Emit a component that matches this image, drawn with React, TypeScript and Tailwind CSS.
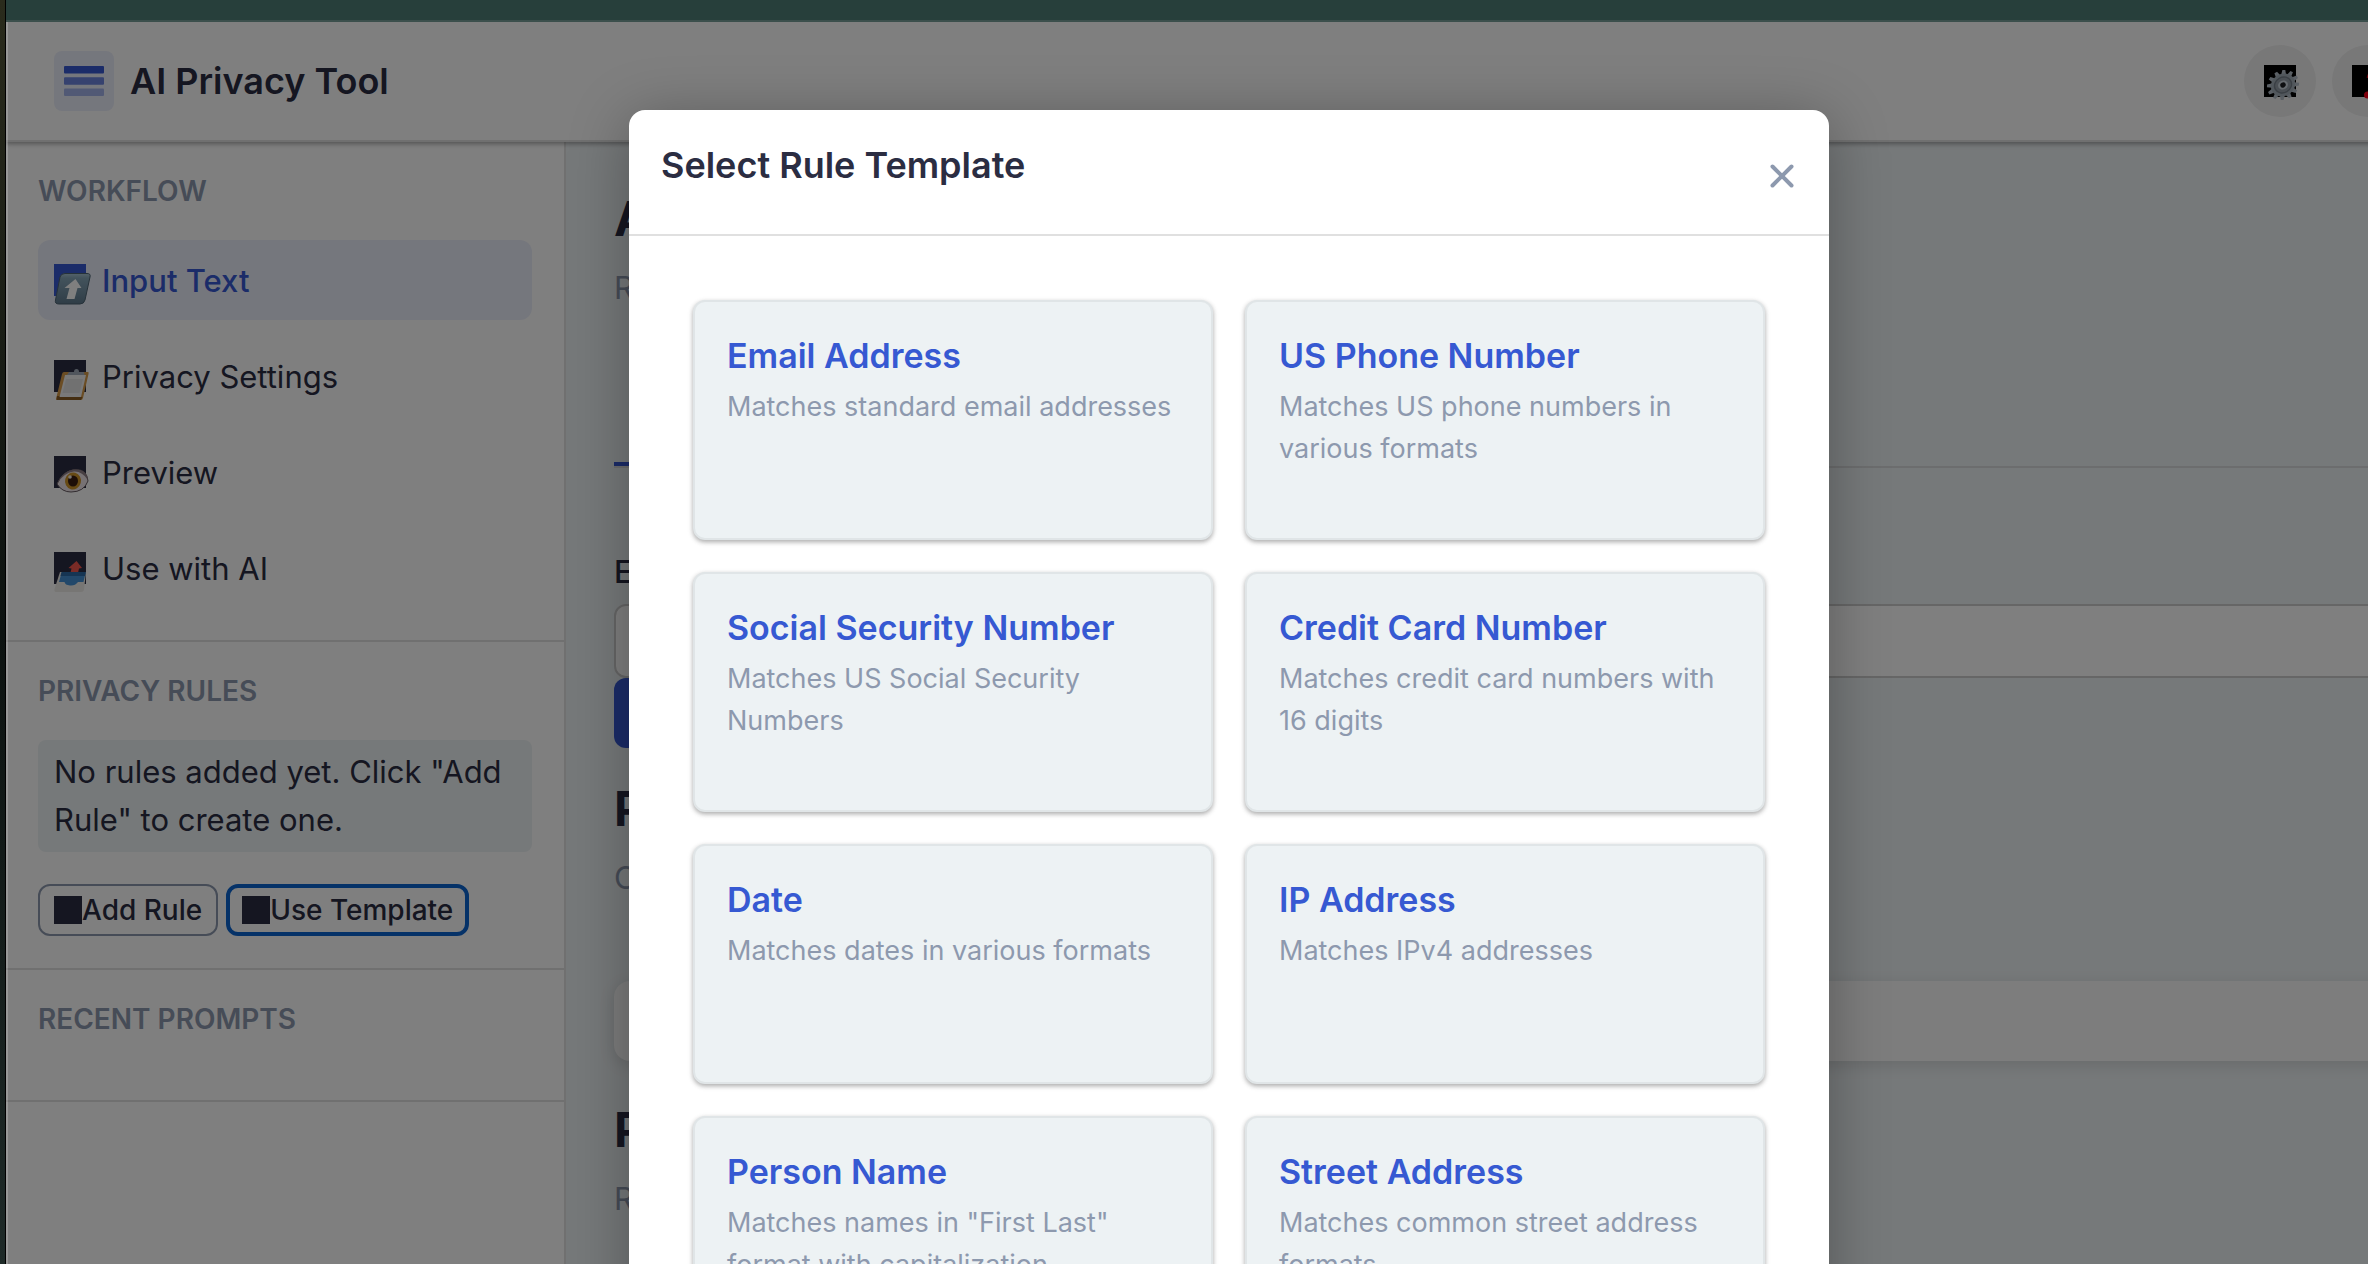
import type { ReactNode } from "react";

const templates = [
  { name: "Email Address", text: "Matches standard email addresses" },
  { name: "US Phone Number", text: "Matches US phone numbers in various formats" },
  { name: "Social Security Number", text: "Matches US Social Security Numbers" },
  { name: "Credit Card Number", text: "Matches credit card numbers with 16 digits" },
  { name: "Date", text: "Matches dates in various formats" },
  { name: "IP Address", text: "Matches IPv4 addresses" },
  { name: "Person Name", text: 'Matches names in "First Last" format with capitalization' },
  { name: "Street Address", text: "Matches common street address formats" },
];

function Emoji({ children }: { children: ReactNode }) {
  return (
    <svg viewBox="0 0 40 44" className="absolute left-0 top-0 h-11 w-10" aria-hidden="true">
      {children}
    </svg>
  );
}

function UploadEmoji() {
  return (
    <Emoji>
      <defs>
        <linearGradient id="up" x1="0" y1="0" x2="0" y2="1">
          <stop offset="0" stopColor="#a9c6d6" />
          <stop offset="0.15" stopColor="#86a6b9" />
          <stop offset="1" stopColor="#5f7a8e" />
        </linearGradient>
      </defs>
      <path d="M11 9.5H33Q37 9.500 36 13L31 36Q30 40 26 40H5Q0.500 40 1.500 36L6 13Q7 9.500 11 9.500Z" fill="url(#up)" stroke="#4d6473" strokeWidth="1" />
      <path d="M21.500 15L27.500 24H23.500L20.500 35H12.500L15.500 24H10.500Z" fill="#ffffff" />
    </Emoji>
  );
}

function ClipboardEmoji() {
  return (
    <Emoji>
      <path d="M10 12H34Q35 12 34.500 14L29 38Q28.500 40 27 40H3Q1.500 40 2.500 37L8 14Q8.500 12 10 12Z" fill="#d69a48" />
      <path d="M3 36L2.500 40H27L28.500 37Z" fill="#8a5c22" />
      <path d="M11 15H32L27 37H5.500Z" fill="#f2f2f2" />
      <path d="M12 19H29L25.500 33H8.500Z" fill="#e2e2e2" />
      <path d="M13 15L15 12H20Q20 9 22.500 9Q25 9 25 12H30L30.500 15Z" fill="#a3adbb" />
    </Emoji>
  );
}

function EyeEmoji() {
  return (
    <Emoji>
      <path d="M3 28Q9 14 22 13.500Q33 13.500 34 25Q30 36 17 36Q8 36 3 28Z" fill="#efe4e8" stroke="#665a61" strokeWidth="1" />
      <path d="M3 28Q9 14 22 13.500Q33 13.500 34 24Q28 15 20 15.500Q9 17 3 28Z" fill="#8f7f86" />
      <ellipse cx="19" cy="25" rx="8" ry="8.500" fill="#cf9428" transform="rotate(15 19 25)" />
      <ellipse cx="19" cy="25" rx="5" ry="5.500" fill="#3a1c0e" />
      <circle cx="16" cy="21" r="1.800" fill="#f5eee8" />
    </Emoji>
  );
}

function OutboxEmoji() {
  return (
    <Emoji>
      <path d="M22.500 9L28 16L25 16.500L23.500 23H16L17.500 16.500L14.500 16Z" fill="#f5564c" />
      <path d="M6 20H32L30 38Q29.500 40 27 40H2Q0 40 0.500 37Z" fill="#eeece8" />
      <path d="M7.500 21H31.500L29.500 30H24Q21 34 16 33.500Q11 33 10.500 30H5Z" fill="#4490d4" />
      <path d="M7.500 20H32L31 24H6.500Z" fill="#2c6aa6" />
    </Emoji>
  );
}

function GearEmoji() {
  const teeth = Array.from({ length: 12 }, (_, i) => i * 30);
  return (
    <Emoji>
      <g transform="translate(19 20) rotate(-30) scale(1 0.880)">
        {teeth.map((a) => (
          <path key={a} d="M-2.500 -11L-1.500 -16.500H1.500L2.500 -11Z" fill="#b4bec9" transform={`rotate(${a})`} />
        ))}
        <circle r="12.500" fill="#a3aeb9" />
        <circle r="9.500" fill="#747e88" />
        <circle r="8" fill="#959fa9" />
        <circle r="5" fill="#cdd6df" />
        <circle r="2.800" fill="#1c1f23" />
      </g>
    </Emoji>
  );
}

function QuestionEmoji() {
  return (
    <Emoji>
      <path d="M16 13Q18 5 25 6Q32 8 29 15L19 23" fill="none" stroke="#d2000f" strokeWidth="3" />
      <circle cx="15.500" cy="30" r="3.500" fill="#ff0018" />
    </Emoji>
  );
}

const nav = [
  { label: "Input Text", icon: <UploadEmoji />, active: true },
  { label: "Privacy Settings", icon: <ClipboardEmoji />, active: false },
  { label: "Preview", icon: <EyeEmoji />, active: false },
  { label: "Use with AI", icon: <OutboxEmoji />, active: false },
];

function RoundButton({ label, children }: { label: string; children: ReactNode }) {
  return (
    <button aria-label={label} className="flex size-18 shrink-0 items-center justify-center rounded-full bg-[#f0f0f0]">
      <span className="relative size-8 bg-black">{children}</span>
    </button>
  );
}

function SideHeading({ children }: { children: ReactNode }) {
  return <h2 className="mb-8 text-[28px] leading-[34px] font-semibold text-[#8d99ae]">{children}</h2>;
}

function Sidebar() {
  return (
    <aside className="w-[560px] shrink-0 border-r-2 border-[#e0e0e0] bg-white">
      <section className="border-b-2 border-[#e0e0e0] p-8">
        <SideHeading>WORKFLOW</SideHeading>
        <nav className="flex flex-col gap-4">
          {nav.map((item) => (
            <a
              key={item.label}
              href="#"
              className={
                item.active
                  ? "flex h-20 items-center gap-4 rounded-xl bg-[#3659d2]/10 px-4 font-medium text-[#3659d2]"
                  : "flex h-20 items-center gap-4 rounded-xl px-4 text-[#2b2d42]"
              }
            >
              <span className="relative size-8 bg-current">{item.icon}</span>
              <span className="pt-0.5">{item.label}</span>
            </a>
          ))}
        </nav>
      </section>
      <section className="border-b-2 border-[#e0e0e0] p-8">
        <SideHeading>PRIVACY RULES</SideHeading>
        <p className="mb-8 rounded-lg bg-[#edf2f4] px-4 py-2">No rules added yet. Click "Add Rule" to create one.</p>
        <div className="flex gap-2 text-[28px] leading-8 font-medium">
          <button className="flex h-13 items-center rounded-xl border-2 border-[#8d99ae] px-3.5">
            <span className="size-7 bg-[#2b2d42]" />
            Add Rule
          </button>
          <button className="flex h-13 items-center rounded-xl border-4 border-[#0b64d0] px-3">
            <span className="size-7 bg-[#2b2d42]" />
            Use Template
          </button>
        </div>
      </section>
      <section className="border-b-2 border-[#e0e0e0] p-8">
        <SideHeading>RECENT PROMPTS</SideHeading>
      </section>
    </aside>
  );
}

function SectionHead({ title, text }: { title: string; text: string }) {
  return (
    <div className="flex flex-col gap-4">
      <h2 className="text-5xl leading-[58px] font-bold">{title}</h2>
      <p className="text-[#8d99ae]">{text}</p>
    </div>
  );
}

function Main() {
  return (
    <main className="min-w-0 grow bg-[#edf2f4] p-12">
      <SectionHead title="Add" text="Read" />
      <div className="mt-14 mb-20 flex border-b-2 border-[#d8dbdd]">
        <button className="h-[98px] w-40 border-b-4 border-[#3659d2]" aria-label="Text" />
      </div>
      <label htmlFor="source" className="mb-2 block font-medium">
        Enter
      </label>
      <input id="source" className="block h-[74px] w-full rounded-xl border-2 border-[#cccccc] bg-white px-4" />
      <button aria-label="Submit" className="block h-[70px] w-60 rounded-xl bg-[#3659d2]" />
      <div className="mt-8">
        <SectionHead title="Plan" text="Check" />
      </div>
      <div className="mt-[79px] mb-10 h-20 rounded-2xl bg-[#fafafa] shadow-[0_4px_16px_rgba(0,0,0,0.12)]" />
      <SectionHead title="Past" text="Recent" />
    </main>
  );
}

function TemplateDialog() {
  return (
    <div
      role="dialog"
      aria-modal="true"
      aria-labelledby="dialog-title"
      className="w-[1200px] self-start rounded-2xl bg-white shadow-[0_8px_60px_rgba(0,0,0,0.3)]"
    >
      <header className="flex h-[126px] items-start justify-between border-b-2 border-[#e0e0e0] p-8">
        <h2 id="dialog-title" className="text-4xl leading-[46px] font-semibold">
          Select Rule Template
        </h2>
        <button aria-label="Close" className="flex h-17 w-[30px] items-center justify-center">
          <svg viewBox="0 0 24 24" className="size-6" fill="none" stroke="#8d99ae" strokeWidth="4" strokeLinecap="round">
            <path d="M2.500 2.500L21.500 21.500M21.500 2.500L2.500 21.500" />
          </svg>
        </button>
      </header>
      <div className="grid grid-cols-2 gap-8 p-16">
        {templates.map((t) => (
          <button
            key={t.name}
            className="flex h-60 flex-col rounded-xl border-2 border-[#e0e5e7] bg-[#edf2f4] p-8 text-left shadow-[0_2px_6px_rgba(0,0,0,0.12),0_2px_4px_rgba(0,0,0,0.24)]"
          >
            <span className="mb-[9px] text-[34px] leading-[43px] font-semibold text-[#3659d2]">{t.name}</span>
            <span className="text-[27px] leading-[42px] text-[#8d99ae]">{t.text}</span>
          </button>
        ))}
      </div>
    </div>
  );
}

export default function App() {
  return (
    <div className="flex h-screen overflow-hidden bg-black font-['Inter',sans-serif] text-[31px] leading-[48px] text-[#2b2d42]">
      <div className="mr-px w-[5px] shrink-0 bg-linear-to-b from-[#2a2b1c] via-[#0c1210] via-50% to-[#1e2a28]" />
      <div className="-mr-[84px] flex min-w-0 grow flex-col">
        <div className="h-[22px] shrink-0 border-b-2 border-[#3b4f4c] bg-[#273f3b]" />
        <div className="relative flex min-h-0 grow flex-col overflow-hidden">
          <header className="z-10 flex h-30 shrink-0 items-center gap-4 border-b-2 border-[#e0e0e0] bg-white px-12 shadow-[0_2px_6px_rgba(0,0,0,0.12),0_2px_4px_rgba(0,0,0,0.24)]">
            <div className="flex size-15 items-center justify-center rounded-lg bg-[#3659d2]/10">
              <svg viewBox="0 0 40 30" className="h-[30px] w-10" fill="#3659d2" aria-hidden="true">
                <rect width="40" height="7.500" rx="1" />
                <rect y="11.200" width="40" height="7.500" rx="1" opacity="0.700" />
                <rect y="22.500" width="40" height="7.500" rx="1" opacity="0.400" />
              </svg>
            </div>
            <h1 className="grow text-4xl leading-[46px] font-semibold">AI Privacy Tool</h1>
            <RoundButton label="Settings">
              <GearEmoji />
            </RoundButton>
            <RoundButton label="Help">
              <QuestionEmoji />
            </RoundButton>
          </header>
          <div className="flex min-h-0 grow">
            <Sidebar />
            <Main />
          </div>
          <div className="absolute inset-0 z-20 flex justify-center bg-black/50 pt-22 shadow-[inset_2px_0_0_rgba(255,255,255,0.2)]">
            <TemplateDialog />
          </div>
        </div>
      </div>
    </div>
  );
}
